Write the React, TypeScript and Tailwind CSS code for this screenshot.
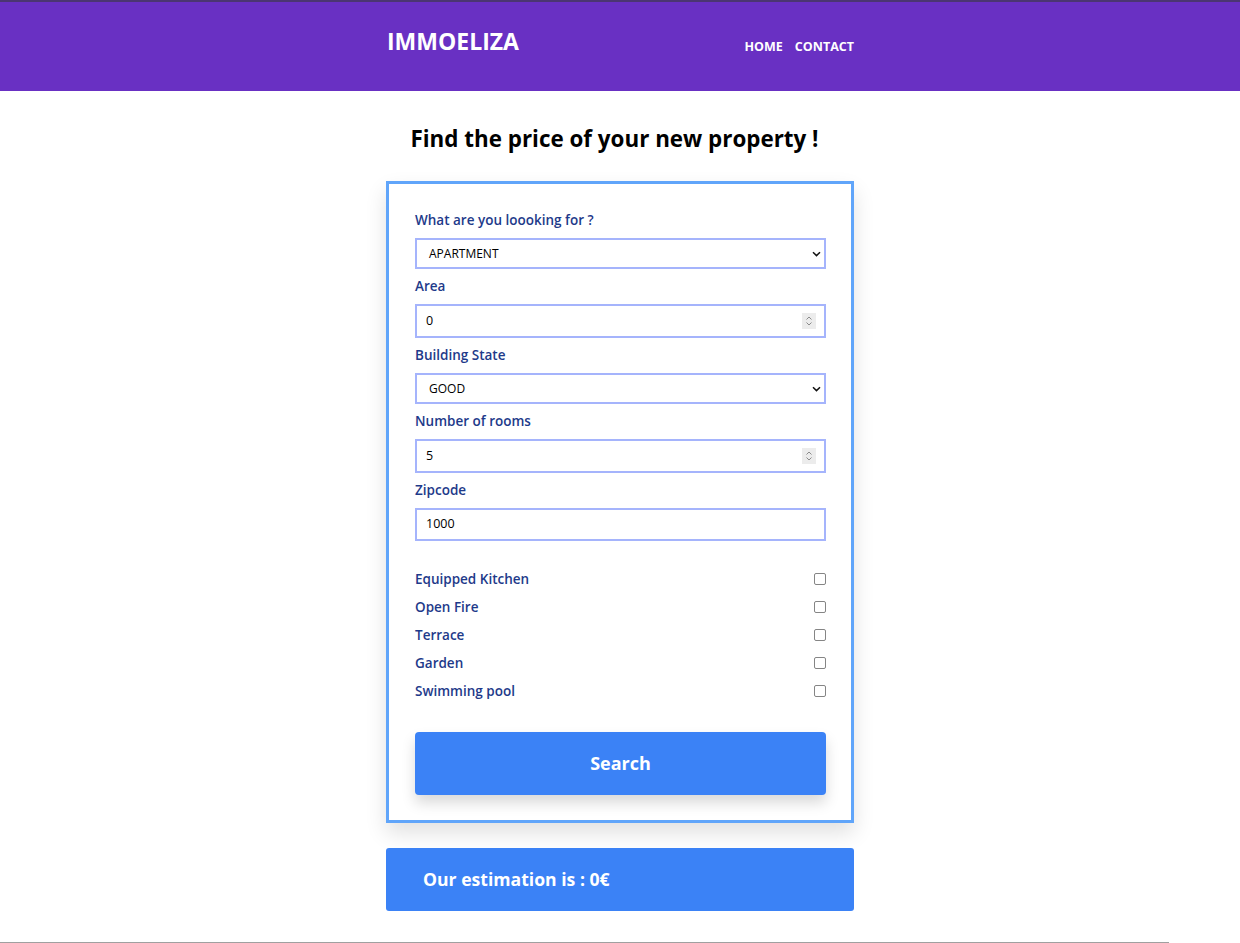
import React from "react";

const font = { fontFamily: '"Open Sans", "Noto Sans", sans-serif' };

function Chevron() {
  return (
    <svg className="pointer-events-none absolute right-[5px] top-1/2 -translate-y-1/2" width="9" height="6" viewBox="0 0 9 6">
      <path d="M1 1.2 L4.5 4.6 L8 1.2" fill="none" stroke="#111" strokeWidth="1.5" />
    </svg>
  );
}

function Spinner() {
  return (
    <div className="pointer-events-none absolute right-[10px] top-1/2 flex h-[16px] w-[14px] -translate-y-1/2 flex-col items-center justify-center bg-[#ececec]">
      <svg width="8" height="12" viewBox="0 0 8 12">
        <path d="M1.5 4.5 L4 2 L6.5 4.5" fill="none" stroke="#8a8a8a" strokeWidth="1" />
        <path d="M1.5 7.5 L4 10 L6.5 7.5" fill="none" stroke="#8a8a8a" strokeWidth="1" />
      </svg>
    </div>
  );
}

function Label({ children }: { children: React.ReactNode }) {
  return <label className="block h-[19px] text-[13.5px] font-semibold leading-[19px] text-[#1e3a8a]">{children}</label>;
}

function SelectBox({ value, h }: { value: string; h: number }) {
  return (
    <div className="relative mt-[8px] mb-[8px]">
      <div
        className="flex items-center border-2 border-[#a5b4fc] bg-white pl-[12px] text-[12px] text-black"
        style={{ height: h }}
      >
        {value}
      </div>
      <Chevron />
    </div>
  );
}

function InputBox({ value, spin, h }: { value: string; spin?: boolean; h: number }) {
  return (
    <div className="relative mt-[8px] mb-[8px]">
      <div
        className="flex items-center border-2 border-[#a5b4fc] bg-white pl-[9px] text-[12.5px] text-black"
        style={{ height: h }}
      >
        {value}
      </div>
      {spin && <Spinner />}
    </div>
  );
}

function Check({ label }: { label: string }) {
  return (
    <div className="flex h-[28px] items-center justify-between">
      <span className="text-[13.5px] font-semibold text-[#1e3a8a]">{label}</span>
      <span className="block h-[12px] w-[12px] rounded-[2px] border border-[#858585] bg-white" />
    </div>
  );
}

export default function App() {
  return (
    <div className="min-h-[943px] bg-white" style={font}>
      <header className="h-[91px] border-t-2 border-[#4b3572] bg-[#6930c3]">
        <div className="mx-auto flex w-[468px] items-start justify-between pl-[1px]">
          <div className="mt-[25px] text-[23px] font-bold leading-[28px] text-white">IMMOELIZA</div>
          <nav className="mt-[36px] flex gap-[12px] text-[12.5px] font-bold leading-[18px] text-white">
            <span>HOME</span>
            <span>CONTACT</span>
          </nav>
        </div>
      </header>
      <main className="mx-auto w-[468px]">
        <h1 className="mt-[33px] pr-[11px] text-center text-[22.4px] font-bold leading-[30px] text-black">
          Find the price of your new property !
        </h1>
        <form className="mt-[27px] border-[3px] border-[#60a5fa] bg-white pl-[26px] pr-[25px] pt-[27px] pb-[25px] shadow-[0_10px_20px_rgba(0,0,0,0.12)]">
          <Label>What are you loooking for ?</Label>
          <SelectBox value="APARTMENT" h={31} />
          <Label>Area</Label>
          <InputBox value="0" spin h={34} />
          <Label>Building State</Label>
          <SelectBox value="GOOD" h={31} />
          <Label>Number of rooms</Label>
          <InputBox value="5" spin h={34} />
          <Label>Zipcode</Label>
          <InputBox value="1000" h={33} />
          <div className="mt-[24px]">
            <Check label="Equipped Kitchen" />
            <Check label="Open Fire" />
            <Check label="Terrace" />
            <Check label="Garden" />
            <Check label="Swimming pool" />
          </div>
          <button
            type="button"
            className="mt-[27px] flex h-[63px] w-full items-center justify-center rounded-[4px] bg-[#3b82f6] text-[18px] font-bold text-white shadow-[0_8px_14px_rgba(0,0,0,0.15)]"
          >
            Search
          </button>
        </form>
        <div className="mt-[25px] flex h-[63px] items-center rounded-[3px] bg-[#3b82f6] pl-[37px] text-[17.6px] font-bold text-white">
          Our estimation is : 0€
        </div>
      </main>
      <div className="mt-[31px] h-px w-[1169px] bg-[#a0a0a0]" />
    </div>
  );
}
